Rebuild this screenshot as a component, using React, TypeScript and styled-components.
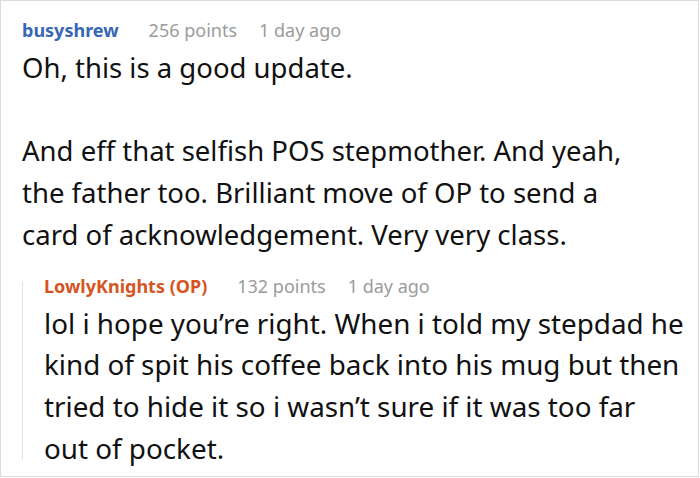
import styled, { createGlobalStyle } from "styled-components";

const GlobalStyle = createGlobalStyle`
  html, body {
    margin: 0;
    padding: 0;
    background: #fff;
  }
  body {
    font-family: "Noto Sans", "Open Sans", sans-serif;
  }
`;

type Comment = {
  author: string;
  points: number;
  time: string;
  paragraphs: string[];
  isOp?: boolean;
  replies?: Comment[];
};

const thread: Comment = {
  author: "busyshrew",
  points: 256,
  time: "1 day ago",
  paragraphs: [
    "Oh, this is a good update.",
    "And eff that selfish POS stepmother. And yeah, the father too. Brilliant move of OP to send a card of acknowledgement. Very very class.",
  ],
  replies: [
    {
      author: "LowlyKnights (OP)",
      points: 132,
      time: "1 day ago",
      isOp: true,
      paragraphs: [
        "lol i hope you’re right. When i told my stepdad he kind of spit his coffee back into his mug but then tried to hide it so i wasn’t sure if it was too far out of pocket.",
      ],
    },
  ],
};

const CommentBlock = ({ comment, nested }: { comment: Comment; nested?: boolean }) => (
  <Entry $nested={nested}>
    <Meta>
      <Author $op={comment.isOp}>{comment.author}</Author>
      <Muted>{comment.points} points</Muted>
      <Muted>{comment.time}</Muted>
    </Meta>
    <Body $nested={nested}>
      {comment.paragraphs.map((p) => (
        <p key={p}>{p}</p>
      ))}
    </Body>
    {comment.replies?.map((r) => (
      <CommentBlock key={r.author} comment={r} nested />
    ))}
  </Entry>
);

const App = () => (
  <>
    <GlobalStyle />
    <Frame>
      <CommentBlock comment={thread} />
    </Frame>
  </>
);

const Frame = styled.div`
  box-sizing: border-box;
  width: 699px;
  height: 477px;
  border: 1px solid #dcdcdc;
  padding: 15px 14px 0 21px;
  overflow: hidden;
`;

const Entry = styled.div<{ $nested?: boolean }>`
  position: relative;
  ${({ $nested }) =>
    $nested &&
    `
    margin-top: 16px;
    padding-left: 22px;

    &::before {
      content: "";
      position: absolute;
      left: 0;
      top: 10px;
      bottom: 9px;
      width: 1px;
      background: #e2e2e2;
    }
  `}
`;

const Meta = styled.div`
  display: flex;
  gap: 22px;
  font-size: 18px;
  line-height: 28px;
`;

const Author = styled.span<{ $op?: boolean }>`
  font-weight: 700;
  color: ${({ $op }) => ($op ? "#d5541f" : "#3766b4")};
  margin-right: 8px;
`;

const Muted = styled.span`
  color: #9b9b9b;
`;

const Body = styled.div<{ $nested?: boolean }>`
  margin-top: 3px;
  padding-right: ${({ $nested }) => ($nested ? "0" : "27px")};
  font-size: ${({ $nested }) => ($nested ? "27.8px" : "27.5px")};
  line-height: 41.7px;
  color: #111;

  p {
    margin: 0;
  }

  p + p {
    margin-top: 41.7px;
  }
`;

export default App;
